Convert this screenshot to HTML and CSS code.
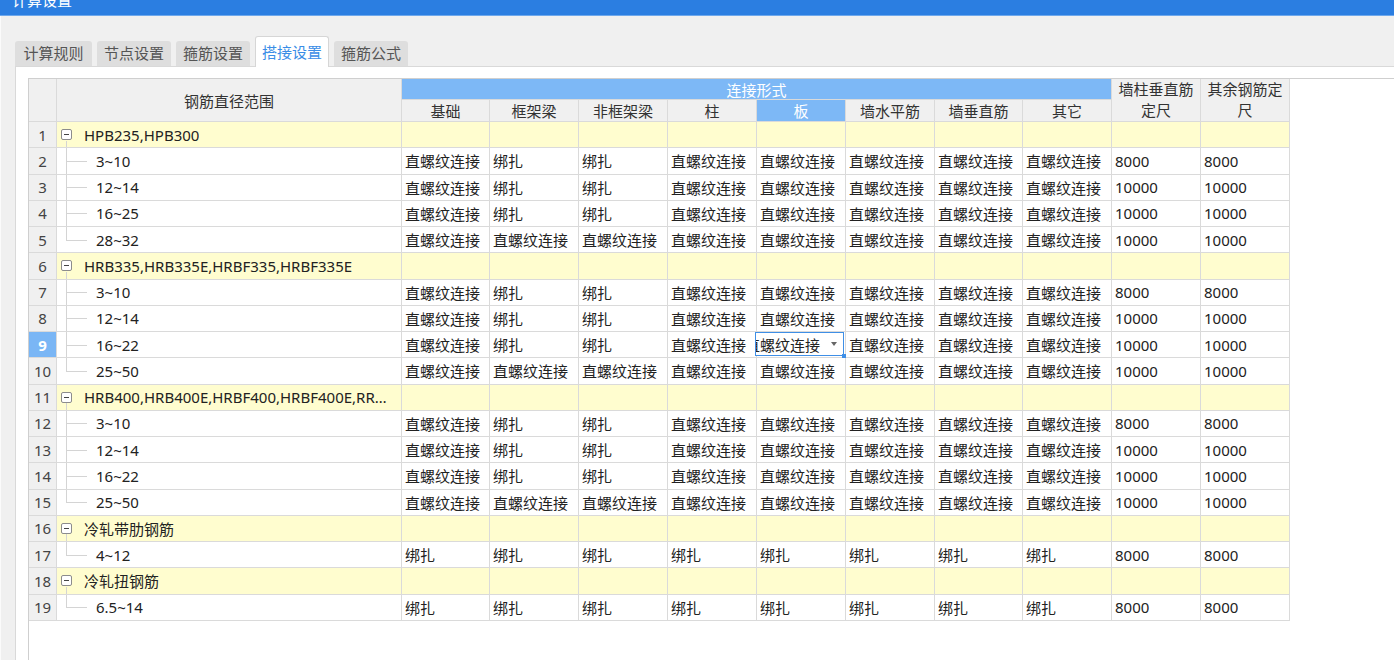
FILE: index.html
```html
<!DOCTYPE html>
<html lang="zh-CN">
<head>
<meta charset="utf-8">
<title>计算设置</title>
<link rel="stylesheet" href="styles.css">
</head>
<body>
<div class="titlebar"><span class="title">计算设置</span></div>
<div class="window">
  <div class="tabs">
    <div class="tab first">计算规则</div>
    <div class="tab">节点设置</div>
    <div class="tab">箍筋设置</div>
    <div class="tab active">搭接设置</div>
    <div class="tab">箍筋公式</div>
  </div>
  <div class="panel">
    <div class="gridbox">
      <div class="grid">
        <div class="h corner"></div>
        <div class="h namehd">钢筋直径范围</div>
        <div class="h blue conn">连接形式</div>
        <div class="h fix fix1">墙柱垂直筋定尺</div>
        <div class="h fix fix2">其余钢筋定尺</div>
        <div class="h sub">基础</div>
        <div class="h sub">框架梁</div>
        <div class="h sub">非框架梁</div>
        <div class="h sub">柱</div>
        <div class="h sub blue">板</div>
        <div class="h sub">墙水平筋</div>
        <div class="h sub">墙垂直筋</div>
        <div class="h sub">其它</div>

        <!-- 1 -->
        <div class="rh">1</div>
        <div class="nm grp"><span class="box"></span><span class="gt">HPB235,HPB300</span></div>
        <div class="g"></div><div class="g"></div><div class="g"></div><div class="g"></div><div class="g"></div><div class="g"></div><div class="g"></div><div class="g"></div><div class="g"></div><div class="g"></div>
        <!-- 2 -->
        <div class="rh">2</div>
        <div class="nm br">3~10</div>
        <div class="c">直螺纹连接</div><div class="c">绑扎</div><div class="c">绑扎</div><div class="c">直螺纹连接</div><div class="c">直螺纹连接</div><div class="c">直螺纹连接</div><div class="c">直螺纹连接</div><div class="c">直螺纹连接</div><div class="c">8000</div><div class="c">8000</div>
        <!-- 3 -->
        <div class="rh">3</div>
        <div class="nm br">12~14</div>
        <div class="c">直螺纹连接</div><div class="c">绑扎</div><div class="c">绑扎</div><div class="c">直螺纹连接</div><div class="c">直螺纹连接</div><div class="c">直螺纹连接</div><div class="c">直螺纹连接</div><div class="c">直螺纹连接</div><div class="c">10000</div><div class="c">10000</div>
        <!-- 4 -->
        <div class="rh">4</div>
        <div class="nm br">16~25</div>
        <div class="c">直螺纹连接</div><div class="c">绑扎</div><div class="c">绑扎</div><div class="c">直螺纹连接</div><div class="c">直螺纹连接</div><div class="c">直螺纹连接</div><div class="c">直螺纹连接</div><div class="c">直螺纹连接</div><div class="c">10000</div><div class="c">10000</div>
        <!-- 5 -->
        <div class="rh">5</div>
        <div class="nm br last">28~32</div>
        <div class="c">直螺纹连接</div><div class="c">直螺纹连接</div><div class="c">直螺纹连接</div><div class="c">直螺纹连接</div><div class="c">直螺纹连接</div><div class="c">直螺纹连接</div><div class="c">直螺纹连接</div><div class="c">直螺纹连接</div><div class="c">10000</div><div class="c">10000</div>
        <!-- 6 -->
        <div class="rh">6</div>
        <div class="nm grp"><span class="box"></span><span class="gt">HRB335,HRB335E,HRBF335,HRBF335E</span></div>
        <div class="g"></div><div class="g"></div><div class="g"></div><div class="g"></div><div class="g"></div><div class="g"></div><div class="g"></div><div class="g"></div><div class="g"></div><div class="g"></div>
        <!-- 7 -->
        <div class="rh">7</div>
        <div class="nm br">3~10</div>
        <div class="c">直螺纹连接</div><div class="c">绑扎</div><div class="c">绑扎</div><div class="c">直螺纹连接</div><div class="c">直螺纹连接</div><div class="c">直螺纹连接</div><div class="c">直螺纹连接</div><div class="c">直螺纹连接</div><div class="c">8000</div><div class="c">8000</div>
        <!-- 8 -->
        <div class="rh">8</div>
        <div class="nm br">12~14</div>
        <div class="c">直螺纹连接</div><div class="c">绑扎</div><div class="c">绑扎</div><div class="c">直螺纹连接</div><div class="c">直螺纹连接</div><div class="c">直螺纹连接</div><div class="c">直螺纹连接</div><div class="c">直螺纹连接</div><div class="c">10000</div><div class="c">10000</div>
        <!-- 9 -->
        <div class="rh sel">9</div>
        <div class="nm br">16~22</div>
        <div class="c">直螺纹连接</div><div class="c">绑扎</div><div class="c">绑扎</div><div class="c">直螺纹连接</div>
        <div class="c edit"><div class="editor"><span class="etext">直螺纹连接</span><span class="caret"></span><span class="handle"></span></div></div>
        <div class="c">直螺纹连接</div><div class="c">直螺纹连接</div><div class="c">直螺纹连接</div><div class="c">10000</div><div class="c">10000</div>
        <!-- 10 -->
        <div class="rh">10</div>
        <div class="nm br last">25~50</div>
        <div class="c">直螺纹连接</div><div class="c">直螺纹连接</div><div class="c">直螺纹连接</div><div class="c">直螺纹连接</div><div class="c">直螺纹连接</div><div class="c">直螺纹连接</div><div class="c">直螺纹连接</div><div class="c">直螺纹连接</div><div class="c">10000</div><div class="c">10000</div>
        <!-- 11 -->
        <div class="rh">11</div>
        <div class="nm grp"><span class="box"></span><span class="gt">HRB400,HRB400E,HRBF400,HRBF400E,RRB400</span></div>
        <div class="g"></div><div class="g"></div><div class="g"></div><div class="g"></div><div class="g"></div><div class="g"></div><div class="g"></div><div class="g"></div><div class="g"></div><div class="g"></div>
        <!-- 12 -->
        <div class="rh">12</div>
        <div class="nm br">3~10</div>
        <div class="c">直螺纹连接</div><div class="c">绑扎</div><div class="c">绑扎</div><div class="c">直螺纹连接</div><div class="c">直螺纹连接</div><div class="c">直螺纹连接</div><div class="c">直螺纹连接</div><div class="c">直螺纹连接</div><div class="c">8000</div><div class="c">8000</div>
        <!-- 13 -->
        <div class="rh">13</div>
        <div class="nm br">12~14</div>
        <div class="c">直螺纹连接</div><div class="c">绑扎</div><div class="c">绑扎</div><div class="c">直螺纹连接</div><div class="c">直螺纹连接</div><div class="c">直螺纹连接</div><div class="c">直螺纹连接</div><div class="c">直螺纹连接</div><div class="c">10000</div><div class="c">10000</div>
        <!-- 14 -->
        <div class="rh">14</div>
        <div class="nm br">16~22</div>
        <div class="c">直螺纹连接</div><div class="c">绑扎</div><div class="c">绑扎</div><div class="c">直螺纹连接</div><div class="c">直螺纹连接</div><div class="c">直螺纹连接</div><div class="c">直螺纹连接</div><div class="c">直螺纹连接</div><div class="c">10000</div><div class="c">10000</div>
        <!-- 15 -->
        <div class="rh">15</div>
        <div class="nm br last">25~50</div>
        <div class="c">直螺纹连接</div><div class="c">直螺纹连接</div><div class="c">直螺纹连接</div><div class="c">直螺纹连接</div><div class="c">直螺纹连接</div><div class="c">直螺纹连接</div><div class="c">直螺纹连接</div><div class="c">直螺纹连接</div><div class="c">10000</div><div class="c">10000</div>
        <!-- 16 -->
        <div class="rh">16</div>
        <div class="nm grp"><span class="box"></span><span class="gt">冷轧带肋钢筋</span></div>
        <div class="g"></div><div class="g"></div><div class="g"></div><div class="g"></div><div class="g"></div><div class="g"></div><div class="g"></div><div class="g"></div><div class="g"></div><div class="g"></div>
        <!-- 17 -->
        <div class="rh">17</div>
        <div class="nm br last">4~12</div>
        <div class="c">绑扎</div><div class="c">绑扎</div><div class="c">绑扎</div><div class="c">绑扎</div><div class="c">绑扎</div><div class="c">绑扎</div><div class="c">绑扎</div><div class="c">绑扎</div><div class="c">8000</div><div class="c">8000</div>
        <!-- 18 -->
        <div class="rh">18</div>
        <div class="nm grp"><span class="box"></span><span class="gt">冷轧扭钢筋</span></div>
        <div class="g"></div><div class="g"></div><div class="g"></div><div class="g"></div><div class="g"></div><div class="g"></div><div class="g"></div><div class="g"></div><div class="g"></div><div class="g"></div>
        <!-- 19 -->
        <div class="rh">19</div>
        <div class="nm br last">6.5~14</div>
        <div class="c">绑扎</div><div class="c">绑扎</div><div class="c">绑扎</div><div class="c">绑扎</div><div class="c">绑扎</div><div class="c">绑扎</div><div class="c">绑扎</div><div class="c">绑扎</div><div class="c">8000</div><div class="c">8000</div>
      </div>
    </div>
  </div>
</div>
</body>
</html>
```
FILE: styles.css
```css
* { box-sizing: border-box; }

body {
  margin: 0;
  height: 660px;
  overflow: hidden;
  background: #f0f0f0;
  font-family: "Noto Sans", "Noto Sans CJK SC", sans-serif;
  font-size: 15px;
  color: #222;
}

.titlebar {
  height: 16px;
  background: #2b7ee1;
  border-bottom: 1px solid #6ea8ec;
  overflow: hidden;
  padding-left: 12px;
  color: #fff;
}

.title {
  display: block;
  margin-top: -10px;
  line-height: 20px;
}

.window {
  padding-top: 20px;
  border-left: 1px solid #fbfbfb;
}

.tabs {
  display: flex;
  align-items: flex-end;
  gap: 5px;
  height: 30px;
  margin-left: 14px;
}

.tab {
  width: 74px;
  height: 25px;
  line-height: 25px;
  text-align: center;
  background: #dedede;
  border-radius: 3px 3px 0 0;
  color: #555;
  white-space: nowrap;
}

.tab.first { width: 77px; }

.tab.active {
  position: relative;
  height: 31px;
  line-height: 30px;
  margin-bottom: -1px;
  background: #fff;
  border: 1px solid #d6d6d6;
  border-bottom: none;
  color: #3a8de6;
}

.panel {
  margin-left: 14px;
  height: 600px;
  background: #fff;
  border-top: 1px solid #d9d9d9;
  border-left: 1px solid #d9d9d9;
  padding: 11px 0 0 12px;
}

.gridbox {
  height: 600px;
  background: #fff;
  border-top: 1px solid #cfcfcf;
  border-left: 1px solid #cfcfcf;
}

.grid {
  display: grid;
  grid-template-columns: 28px 345px 88px 89px 89px 89px 89px 89px 88px 89px 89px 89px;
  grid-template-rows: 21px 22px repeat(19, 26.26px);
  width: 1261px;
}

.grid > div {
  border-right: 1px solid #dadada;
  border-bottom: 1px solid #dadada;
  display: flex;
  align-items: center;
  white-space: nowrap;
  overflow: hidden;
  min-width: 0;
}

.h {
  background: #f0f0f0;
  justify-content: center;
  color: #333;
}

.corner { grid-row: 1 / span 2; grid-column: 1; }
.namehd { grid-row: 1 / span 2; grid-column: 2; }
.conn { grid-row: 1; grid-column: 3 / span 8; }
.fix1 { grid-row: 1 / span 2; grid-column: 11; }
.fix2 { grid-row: 1 / span 2; grid-column: 12; }
.sub { grid-row: 2; }

.fix {
  white-space: normal !important;
  text-align: center;
  line-height: 21px;
  padding: 0 3px;
}

.blue {
  background: #7db8f6;
  color: #fff;
}

.rh {
  background: #f0f0f0;
  justify-content: center;
  color: #444;
}

.rh.sel {
  background: #7ab6f5;
  color: #fff;
  font-weight: bold;
}

.g { background: #fffdcf; }

.c { padding-left: 3px; }

.nm {
  position: relative;
  padding-left: 39px;
}

.nm.grp {
  background: #fffdcf;
  padding-left: 4px;
  padding-right: 8px;
}

.box {
  flex: none;
  width: 11px;
  height: 11px;
  margin-right: 12px;
  border: 1px solid #8c8c8c;
  border-radius: 2px;
  position: relative;
  background: #fff;
}

.box::after {
  content: "";
  position: absolute;
  left: 2px;
  right: 2px;
  top: 4px;
  height: 1px;
  background: #444;
}

.gt {
  overflow: hidden;
  text-overflow: ellipsis;
  min-width: 0;
}

.grp::after {
  content: "";
  position: absolute;
  left: 9px;
  top: calc(50% + 6px);
  bottom: -1px;
  width: 1px;
  background: #d4d4d4;
}

.br::before {
  content: "";
  position: absolute;
  left: 9px;
  top: 0;
  bottom: -1px;
  width: 1px;
  background: #d4d4d4;
}

.br.last::before { bottom: 50%; }

.br::after {
  content: "";
  position: absolute;
  left: 9px;
  top: 50%;
  width: 21px;
  height: 1px;
  background: #d4d4d4;
}

.edit {
  position: relative;
  overflow: visible !important;
}

.editor {
  position: absolute;
  left: -2px;
  top: 0;
  width: 89px;
  height: 24px;
  border: 1px solid #3f8fe6;
  background: #fff;
  display: flex;
  align-items: center;
}

.etext {
  display: block;
  overflow: hidden;
  width: 70px;
  flex: none;
  text-indent: -11px;
  white-space: nowrap;
}

.caret {
  margin-left: 5px;
  width: 0;
  height: 0;
  border-left: 3px solid transparent;
  border-right: 3px solid transparent;
  border-top: 4px solid #666;
}

.handle {
  position: absolute;
  right: -3px;
  bottom: -3px;
  width: 4px;
  height: 4px;
  background: #3f8fe6;
}
```
